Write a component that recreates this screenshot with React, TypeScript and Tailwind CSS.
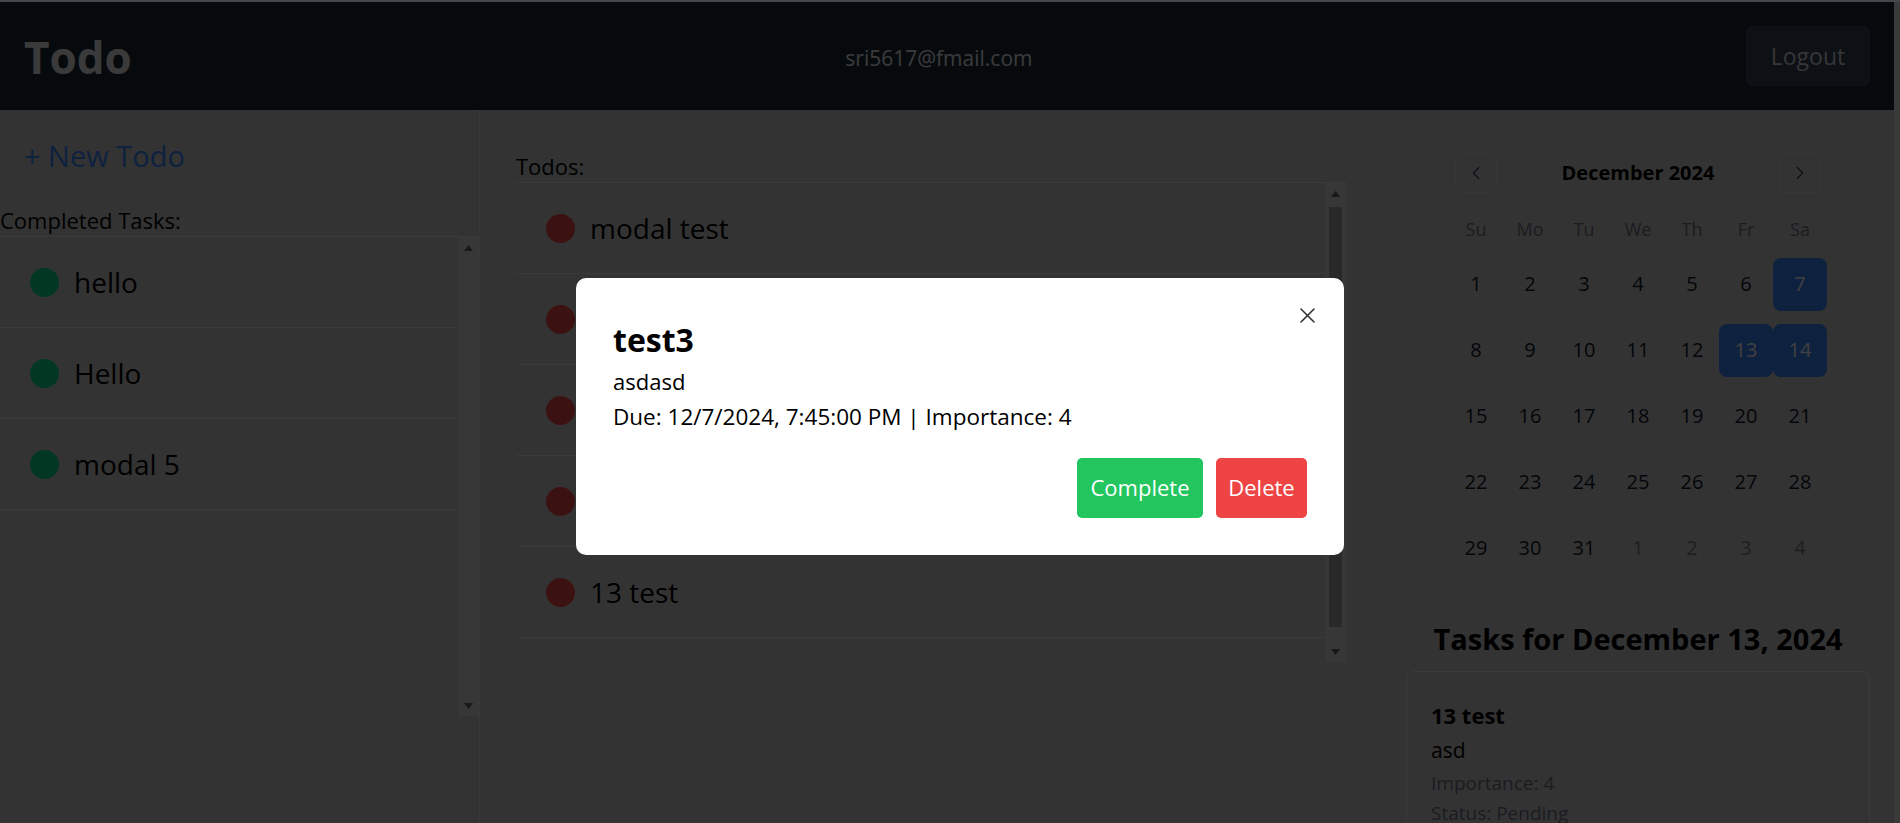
import React from "react";
import { ChevronLeft, ChevronRight } from "lucide-react";

const completed = ["hello", "Hello", "modal 5"];
const todos = ["modal test", "test2", "test3", "modal 4", "13 test"];

const weekDays = ["Su", "Mo", "Tu", "We", "Th", "Fr", "Sa"];

// december 2024 starts on a sunday
const days: { n: number; muted?: boolean }[] = [
  ...Array.from({ length: 31 }, (_, i) => ({ n: i + 1 })),
  { n: 1, muted: true },
  { n: 2, muted: true },
  { n: 3, muted: true },
  { n: 4, muted: true },
];
const marked = [7, 13, 14];

// classic windows-style scrollbar rail drawn beside the list
const Rail = ({ thumb }: { thumb?: boolean }) => (
  <div className="flex w-[21px] shrink-0 flex-col bg-[#d9d9d9]">
    <div className="flex h-[21px] items-center justify-center">
      <svg width="9" height="6" viewBox="0 0 9 6">
        <path d="M4.5 0 9 6H0z" fill="#606060" />
      </svg>
    </div>
    <div className="flex-1 px-[4px] pt-[3px]">
      {thumb && <div className="h-[420px] bg-[#a3a3a3]" />}
    </div>
    <div className="flex h-[21px] items-center justify-center">
      <svg width="9" height="6" viewBox="0 0 9 6">
        <path d="M0 0h9L4.5 6z" fill="#606060" />
      </svg>
    </div>
  </div>
);

const TaskRow = ({ label, done }: { label: string; done?: boolean }) => (
  <div className="flex items-center gap-[15px] pl-[30px] py-[27px] border-b border-[#e8e8e8]">
    <span
      className={
        done
          ? "w-[29px] h-[29px] rounded-full bg-[#0ad98c] shrink-0"
          : "w-[29px] h-[29px] rounded-full bg-[#ef4444] shrink-0"
      }
    />
    <span className="text-[28px] leading-9 text-black">{label}</span>
  </div>
);

const Calendar = () => {
  return (
    <div className="w-[378px]">
      <div className="flex h-10 items-center justify-between px-[6px]">
        <button className="flex h-10 w-[42px] items-center justify-center rounded-md border border-[#dcdcdc]">
          <ChevronLeft size={22} strokeWidth={1.5} className="text-gray-700" />
        </button>
        <span className="text-[20px] font-bold text-black">December 2024</span>
        <button className="flex h-10 w-[42px] items-center justify-center rounded-md border border-[#dcdcdc]">
          <ChevronRight size={22} strokeWidth={1.5} className="text-gray-700" />
        </button>
      </div>
      <div className="mt-5 grid h-8 grid-cols-7 items-center text-center text-[18px] text-[#6b7280]">
        {weekDays.map((d) => (
          <span key={d}>{d}</span>
        ))}
      </div>
      <div className="mt-[6px] grid grid-cols-7">
        {days.map((d, i) => {
          const on = !d.muted && marked.includes(d.n);
          return (
            <div key={i} className="flex h-[66px] items-center justify-center">
              <span
                className={
                  on
                    ? "flex h-[53px] w-[54px] items-center justify-center rounded-lg bg-[#3b82f6] text-xl text-white"
                    : d.muted
                    ? "flex h-[53px] w-[54px] items-center justify-center text-xl text-[#7a7a7a]"
                    : "flex h-[53px] w-[54px] items-center justify-center text-xl text-gray-900"
                }
              >
                {d.n}
              </span>
            </div>
          );
        })}
      </div>
    </div>
  );
};

export default function App() {
  return (
    <div className="flex h-screen flex-col overflow-hidden bg-[#3a3a3a] font-['Open_Sans',sans-serif]">
      <div className="h-[2px] shrink-0 bg-[#46464f]" />
      <div className="relative mr-[6px] flex min-h-0 flex-1 flex-col bg-[#cccccc]">
        <header className="flex h-[108px] shrink-0 items-center justify-between bg-[#1f2937] px-6">
          <h1 className="mt-[2px] text-[44px] font-bold leading-none text-[#e8e8e8]">Todo</h1>
          <span className="mt-[3px] text-[21px] leading-7 text-gray-200">sri5617@fmail.com</span>
          <button className="h-[60px] w-[124px] rounded-[7px] bg-[#374151] text-[23px] text-gray-300">
            Logout
          </button>
        </header>

        <div className="flex min-h-0 flex-1">
          {/* sidebar */}
          <aside className="flex w-[480px] shrink-0 flex-col border-r border-[#e0e0e0]">
            <button className="self-start pl-6 pt-7 text-[29px] leading-9 text-[#3b82f6]">
              + New Todo
            </button>
            <p className="mt-[30px] text-[22px] leading-8 text-black">Completed Tasks:</p>
            <div className="flex h-[480px] border-t border-[#e8e8e8]">
              <div className="min-w-0 flex-1 overflow-hidden">
                {completed.map((t) => (
                  <TaskRow key={t} label={t} done />
                ))}
              </div>
              <Rail />
            </div>
          </aside>

          {/* todos */}
          <main className="min-w-0 flex-1 px-9 pt-10">
            <p className="text-[22px] leading-8 text-black">Todos:</p>
            <div className="flex h-[480px] border-t border-[#e8e8e8]">
              <div className="min-w-0 flex-1 overflow-hidden">
                {todos.map((t) => (
                  <TaskRow key={t} label={t} />
                ))}
              </div>
              <Rail thumb />
            </div>
          </main>

          {/* calendar */}
          <section className="flex w-[512px] shrink-0 flex-col items-center px-6 pt-[43px]">
            <Calendar />
            <h2 className="mt-10 text-[29px] font-bold leading-9 text-black">
              Tasks for December 13, 2024
            </h2>
            <div className="mt-[14px] w-full rounded-lg border border-[#e5e5e5] px-6 pt-7 pb-6">
              <p className="text-[22px] font-bold leading-[30px] text-black">13 test</p>
              <p className="mt-1 text-[21px] leading-8 text-black">asd</p>
              <p className="mt-[2px] text-[19px] leading-[30px] text-[#6b7280]">Importance: 4</p>
              <p className="text-[19px] leading-[30px] text-[#6b7280]">Status: Pending</p>
            </div>
          </section>
        </div>

        {/* modal */}
        <div className="absolute inset-0 flex items-center justify-center bg-black/75 pl-[26px] pt-[7px]">
          <div className="relative w-[768px] rounded-[10px] bg-white px-[37px] pt-[42px] pb-[37px]">
            <button className="absolute right-[29px] top-[30px] h-[15px] w-[15px]">
              <svg viewBox="0 0 15 15" width="15" height="15" stroke="#333" strokeWidth="1.6" strokeLinecap="round">
                <line x1="1" y1="1" x2="14" y2="14" />
                <line x1="14" y1="1" x2="1" y2="14" />
              </svg>
            </button>
            <h3 className="text-[32px] font-bold leading-10 text-black">test3</h3>
            <p className="mt-1.5 text-[22px] leading-[30px] text-black">asdasd</p>
            <p className="mt-1.5 text-[22.5px] leading-[30px] text-black">
              Due: 12/7/2024, 7:45:00 PM | Importance: 4
            </p>
            <div className="mt-[26px] flex justify-end gap-[13px]">
              <button className="h-[60px] w-[126px] rounded-[5px] bg-[#22c55e] text-[22px] text-white">
                Complete
              </button>
              <button className="h-[60px] w-[91px] rounded-[5px] bg-[#ef4444] text-[22px] text-white">
                Delete
              </button>
            </div>
          </div>
        </div>
      </div>
    </div>
  );
}
